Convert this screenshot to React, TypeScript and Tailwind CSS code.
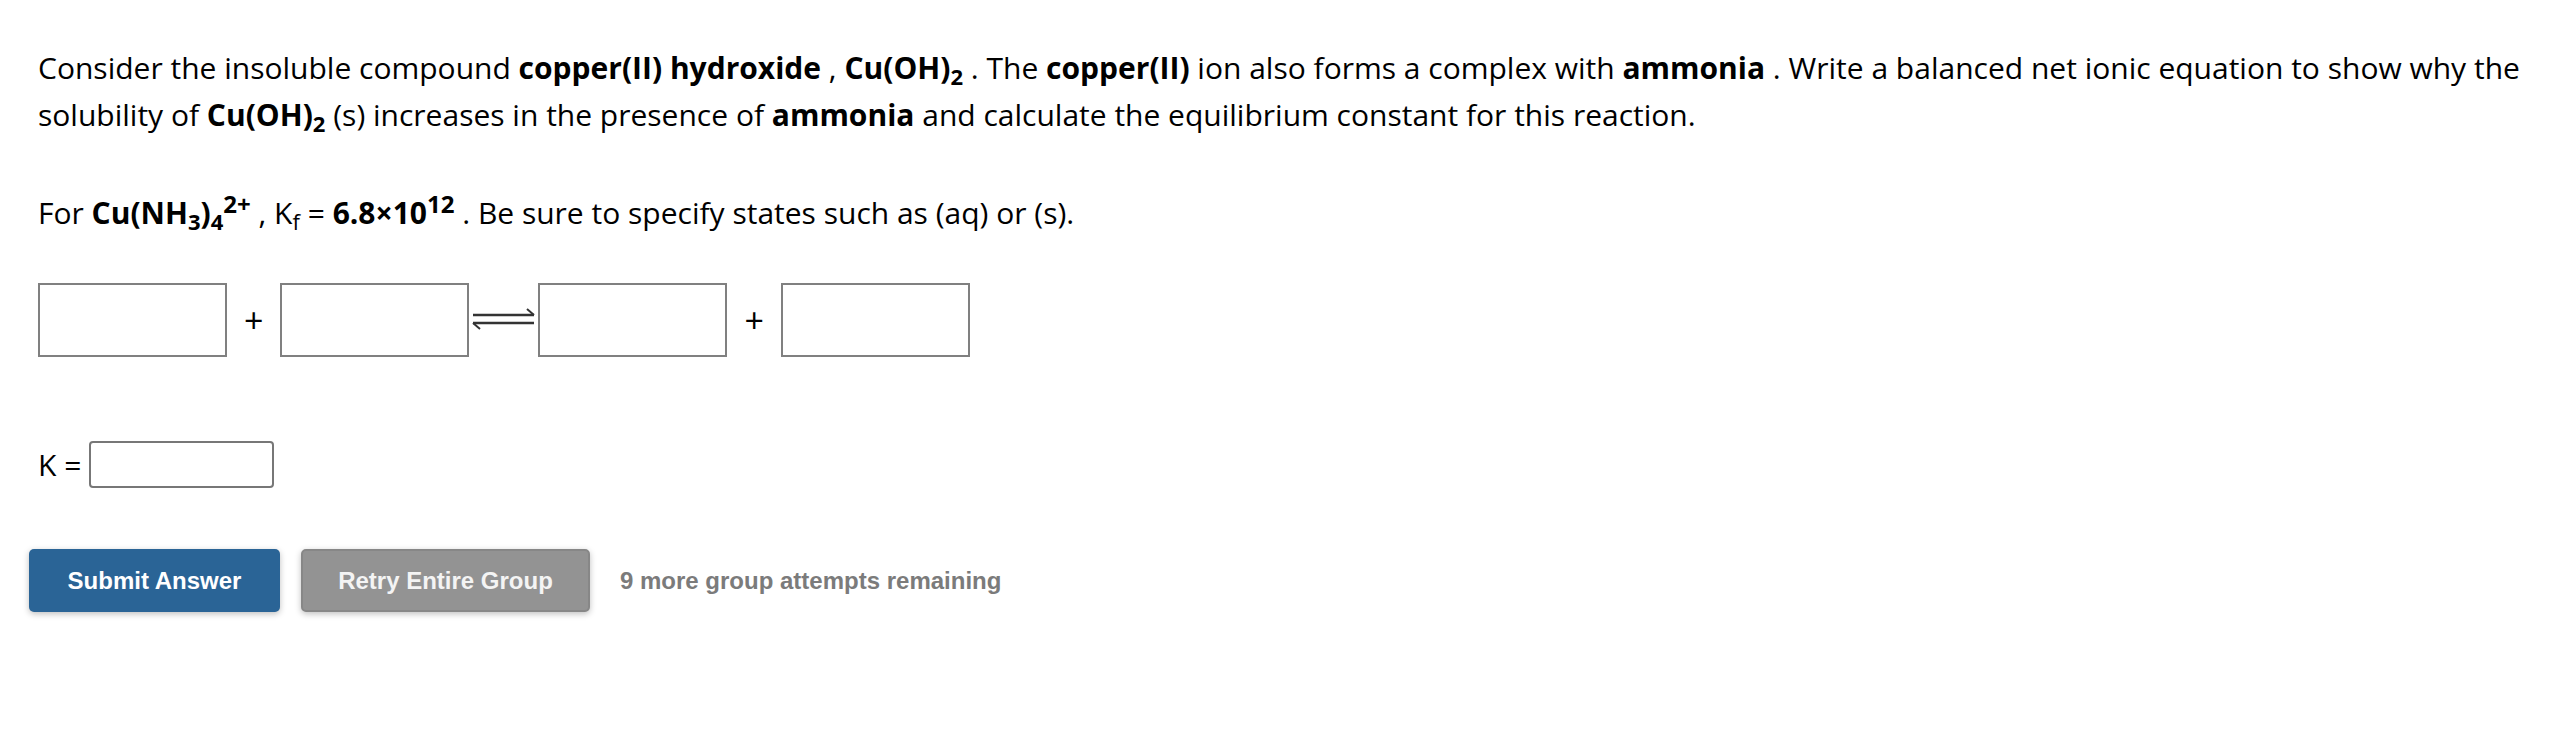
import React from "react";

function Sub({ children, bold }: { children: React.ReactNode; bold?: boolean }) {
  return (
    <span
      className={`relative top-[6px] text-[22px] leading-none ${bold ? "font-bold" : "font-normal"}`}
    >
      {children}
    </span>
  );
}

function Sup({ children }: { children: React.ReactNode }) {
  return <span className="relative top-[-11px] text-[24px] leading-none font-bold">{children}</span>;
}

function AnswerBox() {
  return <div className="w-[189px] h-[74px] border-2 border-[#808080] bg-white" />;
}

function Plus() {
  return <span className="mx-[17px] text-[34px] font-normal leading-none">+</span>;
}

function EquilibriumArrow() {
  return (
    <svg width="69" height="30" viewBox="0 0 69 30" className="shrink-0">
      <line x1="4" y1="10" x2="65" y2="10" stroke="#333" strokeWidth="2.5" />
      <line x1="65" y1="10" x2="58" y2="4" stroke="#333" strokeWidth="2" />
      <line x1="4" y1="18" x2="65" y2="18" stroke="#333" strokeWidth="2.5" />
      <line x1="4" y1="18" x2="11" y2="24" stroke="#333" strokeWidth="2" />
    </svg>
  );
}

export default function App() {
  return (
    <div className="min-h-[730px] bg-white pl-[38px] pr-[12px] pt-[44px] text-black font-['Open_Sans',sans-serif] text-[30px] leading-[47px]">
      {/* Question text */}
      <p>
        Consider the insoluble compound <b>copper(II) hydroxide</b> ,{" "}
        <b>
          Cu(OH)<Sub bold>2</Sub>
        </b>{" "}
        . The <b>copper(II)</b> ion also forms a complex with <b>ammonia</b> . Write a balanced net
        ionic equation to show why the solubility of{" "}
        <b>
          Cu(OH)<Sub bold>2</Sub>
        </b>{" "}
        (s) increases in the presence of <b>ammonia</b> and calculate the equilibrium constant for
        this reaction.
      </p>

      <p className="mt-[51px]">
        For{" "}
        <b>
          Cu(NH<Sub bold>3</Sub>)<Sub bold>4</Sub>
          <Sup>2+</Sup>
        </b>{" "}
        , K<Sub>f</Sub> = <b>6.8×10</b>
        <Sup>12</Sup> . Be sure to specify states such as (aq) or (s).
      </p>

      {/* Equation inputs */}
      <div className="mt-[47px] flex items-center">
        <AnswerBox />
        <Plus />
        <AnswerBox />
        <EquilibriumArrow />
        <AnswerBox />
        <Plus />
        <AnswerBox />
      </div>

      {/* K input */}
      <div className="mt-[84px] flex items-center">
        <span>K =</span>
        <div className="ml-[8px] w-[185px] h-[47px] rounded-[4px] border-2 border-[#777] bg-white" />
      </div>

      {/* Actions */}
      <div className="mt-[61px] ml-[-9px] flex items-center font-['Liberation_Sans',Arial,sans-serif] font-bold text-[24px] leading-none">
        <button className="w-[251px] h-[63px] rounded-[5px] bg-[#2a6496] text-white shadow-[0_2px_6px_rgba(0,0,0,0.25)]">
          Submit Answer
        </button>
        <button className="ml-[21px] w-[289px] h-[63px] rounded-[5px] bg-[#939393] border-2 border-[#878787] text-[#f4f4f4] shadow-[0_2px_6px_rgba(0,0,0,0.25)]">
          Retry Entire Group
        </button>
        <span className="ml-[30px] text-[#7b7b7b]">9 more group attempts remaining</span>
      </div>
    </div>
  );
}
